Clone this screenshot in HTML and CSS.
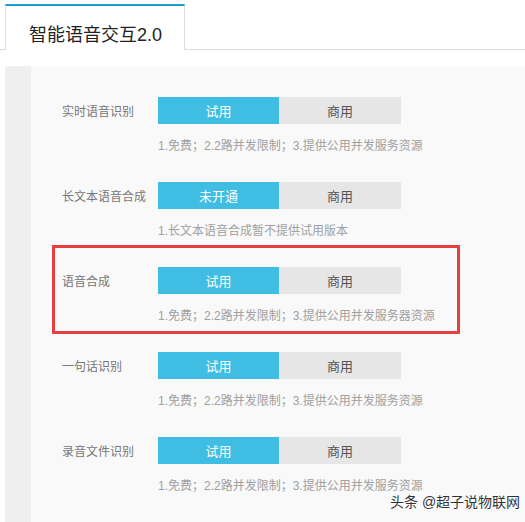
FILE: index.html
```html
<!DOCTYPE html>
<html lang="zh">
<head>
    <meta charset="UTF-8">
    <meta name="viewport" content="width=device-width, initial-scale=1.0">
    <title>智能语音交互2.0</title>
    <link rel="stylesheet" href="styles.css">
</head>
<body>
    <div class="tabs">
        <div class="tab active">智能语音交互2.0</div>
    </div>

    <div class="panel">
        <div class="strip"></div>
        <div class="content">
            <div class="row">
                <div class="line">
                    <span class="label">实时语音识别</span>
                    <div class="switch">
                        <button class="on">试用</button>
                        <button class="off">商用</button>
                    </div>
                </div>
                <p class="desc">1.免费；2.2路并发限制；3.提供公用并发服务资源</p>
            </div>

            <div class="row">
                <div class="line">
                    <span class="label">长文本语音合成</span>
                    <div class="switch">
                        <button class="on">未开通</button>
                        <button class="off">商用</button>
                    </div>
                </div>
                <p class="desc">1.长文本语音合成暂不提供试用版本</p>
            </div>

            <div class="row marked">
                <div class="line">
                    <span class="label">语音合成</span>
                    <div class="switch">
                        <button class="on">试用</button>
                        <button class="off">商用</button>
                    </div>
                </div>
                <p class="desc">1.免费；2.2路并发限制；3.提供公用并发服务器资源</p>
            </div>

            <div class="row">
                <div class="line">
                    <span class="label">一句话识别</span>
                    <div class="switch">
                        <button class="on">试用</button>
                        <button class="off">商用</button>
                    </div>
                </div>
                <p class="desc">1.免费；2.2路并发限制；3.提供公用并发服务资源</p>
            </div>

            <div class="row">
                <div class="line">
                    <span class="label">录音文件识别</span>
                    <div class="switch">
                        <button class="on">试用</button>
                        <button class="off">商用</button>
                    </div>
                </div>
                <p class="desc">1.免费；2.2路并发限制；3.提供公用并发服务资源</p>
            </div>
        </div>
    </div>

    <div class="watermark">头条 @超子说物联网</div>
</body>
</html>
```

FILE: styles.css
```css
body {
    font-family: "Liberation Sans", "Noto Sans CJK SC", sans-serif;
    background: #fff;
    margin: 0;
    height: 522px;
    overflow: hidden;
    position: relative;
}

.tabs {
    height: 50px;
    border-bottom: 1px solid #dcdcdc;
    box-sizing: border-box;
    padding: 4px 0 0 5px;
    display: flex;
}

.tab {
    width: 180px;
    height: 46px;
    box-sizing: border-box;
    border-top: 2px solid #1e9ecb;
    border-left: 1px solid #e2e2e2;
    border-right: 1px solid #dcdcdc;
    background: #fff;
    margin-bottom: -1px;
    padding: 9px 0 0 23px;
    font-size: 18px;
    color: #222;
    display: flex;
    align-items: center;
}

.panel {
    margin: 16px 0 0 5px;
    display: flex;
    height: 456px;
}

.strip {
    width: 26px;
    background: #efefef;
}

.content {
    flex: 1;
    background: #f9f9f9;
    padding: 31px 0 0 31px;
}

.row {
    margin-bottom: 28px;
}

.row.marked {
    position: relative;
}

.row.marked::after {
    content: "";
    position: absolute;
    left: -10px;
    top: -22px;
    width: 408px;
    height: 89px;
    box-sizing: border-box;
    border: 3px solid #e53f3f;
}

.line {
    display: flex;
    align-items: center;
}

.label {
    width: 96px;
    font-size: 12px;
    color: #777;
}

.switch {
    display: flex;
}

.switch button {
    width: 121px;
    height: 27px;
    border: none;
    padding: 0;
    font-family: inherit;
    font-size: 13px;
}

.switch .on {
    background: #3fbde3;
    color: #fff;
}

.switch .off {
    background: #e6e6e6;
    color: #555;
    width: 122px;
}

.desc {
    margin: 14px 0 0 96px;
    font-size: 12px;
    line-height: 16px;
    color: #a0a0a0;
}

.watermark {
    position: absolute;
    left: 390px;
    top: 493px;
    white-space: nowrap;
    font-size: 14px;
    line-height: 18px;
    color: #333;
    text-shadow: 0 0 2px #fff, 0 0 2px #fff;
}
```
